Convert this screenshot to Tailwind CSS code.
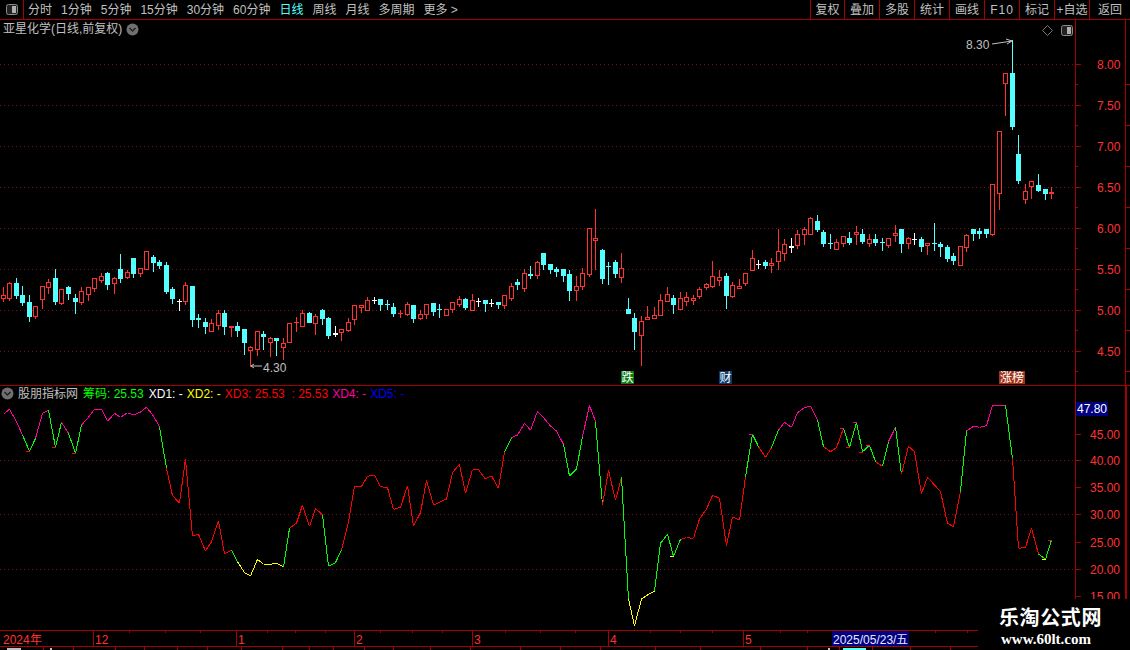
<!DOCTYPE html>
<html lang="zh-CN">
<head>
    <meta charset="UTF-8">
    <title>亚星化学 日线</title>
    <script src="https://cdn.jsdelivr.net/npm/@tailwindcss/browser@4"></script>
</head>
<body class="bg-black overflow-hidden font-['Liberation_Sans','Noto_Sans_CJK_SC',sans-serif] text-xs text-[#c0c0c0]">
<div class="relative w-[1130px] h-[650px] flex flex-col overflow-hidden">

    <!-- toolbar -->
    <div class="h-[20px] flex items-center border-b border-[#a80000] leading-none">
        <div class="w-[24px] h-full flex items-center justify-center border-r border-[#a80000]">
            <svg width="12" height="11" viewBox="0 0 12 11"><rect x="0.5" y="0.5" width="11" height="10" rx="2" fill="#222" stroke="#8c8c8c"/><rect x="6" y="2" width="4" height="7" fill="#b0b0b0"/></svg>
        </div>
        <div class="flex items-center gap-[9px] ml-[4px]">
            <span>分时</span><span>1分钟</span><span>5分钟</span><span>15分钟</span><span>30分钟</span><span>60分钟</span>
            <span class="text-[#54ffff]">日线</span><span>周线</span><span>月线</span><span>多周期</span><span>更多 &gt;</span>
        </div>
        <div class="ml-auto flex h-full">
            <span class="w-[34px] flex items-center justify-center border-l border-[#a80000]">复权</span>
            <span class="w-[35px] flex items-center justify-center border-l border-[#a80000]">叠加</span>
            <span class="w-[35px] flex items-center justify-center border-l border-[#a80000]">多股</span>
            <span class="w-[35px] flex items-center justify-center border-l border-[#a80000]">统计</span>
            <span class="w-[35px] flex items-center justify-center border-l border-[#a80000]">画线</span>
            <span class="w-[35px] flex items-center justify-center border-l border-[#a80000] tracking-[1px]">F10</span>
            <span class="w-[35px] flex items-center justify-center border-l border-[#a80000]">标记</span>
            <span class="w-[35px] flex items-center justify-center border-l border-[#a80000]">+自选</span>
            <span class="w-[41px] flex items-center justify-center border-l border-[#a80000]">返回</span>
        </div>
    </div>

    <!-- price panel -->
    <div class="relative h-[366px] border-b border-[#a80000]">
        <svg id="price" class="block" width="1130" height="365" viewBox="0 20 1130 365" shape-rendering="crispEdges" font-family="Liberation Sans" font-size="12"></svg>
        <div class="absolute left-[3px] top-[2px] h-[14px] flex items-center gap-[4px] leading-none">
            <span>亚星化学(日线,前复权)</span>
            <svg width="13" height="13" viewBox="0 0 13 13"><circle cx="6.5" cy="6.5" r="6" fill="#707070"/><path d="M3.5 5l3 3 3-3" fill="none" stroke="#222" stroke-width="1.5"/></svg>
        </div>
        <svg class="absolute left-[1042px] top-[5px]" width="32" height="12" viewBox="0 0 32 12"><path d="M5.5 0.5l5 5-5 5-5-5z" fill="none" stroke="#777"/><rect x="19.5" y="0.5" width="11" height="10" rx="2" fill="#222" stroke="#8c8c8c"/><rect x="25" y="2" width="4" height="7" fill="#b0b0b0"/></svg>
        <span class="absolute left-[621px] top-[351px] w-[13px] h-[13px] bg-[#0a7a14] text-white flex items-center justify-center leading-none">跌</span>
        <span class="absolute left-[719px] top-[351px] w-[13px] h-[13px] bg-[#0c3c6e] text-white flex items-center justify-center leading-none">财</span>
        <span class="absolute left-[999px] top-[351px] w-[26px] h-[13px] bg-[#a03418] text-white flex items-center justify-center leading-none">涨榜</span>
    </div>

    <!-- indicator panel -->
    <div class="relative h-[244px]">
        <svg id="indicator" class="block" width="1130" height="244" viewBox="0 386 1130 244" shape-rendering="crispEdges" font-family="Liberation Sans" font-size="12"></svg>
        <div class="absolute left-[1px] top-0 h-[15px] flex items-center gap-[4px] leading-none whitespace-nowrap">
            <svg width="13" height="13" viewBox="0 0 13 13"><circle cx="6.5" cy="6.5" r="6" fill="#707070"/><path d="M3.5 5l3 3 3-3" fill="none" stroke="#222" stroke-width="1.5"/></svg>
            <span class="mr-[1px]">股朋指标网</span>
            <span class="text-[#00ff00] mr-[1px]">筹码: 25.53</span>
            <span class="text-white">XD1: -</span>
            <span class="text-[#ffff00]">XD2: -</span>
            <span class="text-[#ff0000]">XD3: 25.53&nbsp;&nbsp;: 25.53</span>
            <span class="text-[#ff00a0]">XD4: -</span>
            <span class="text-[#0000ff]">XD5: -</span>
        </div>
        <span class="absolute left-[1076px] top-[16px] w-[32px] h-[14px] bg-[#000080] text-white flex items-center justify-center leading-none">47.80</span>
    </div>

    <!-- time axis -->
    <svg id="timeaxis" class="block" width="1130" height="20" viewBox="0 630 1130 20" shape-rendering="crispEdges" font-family="Liberation Sans" font-size="12"></svg>

    <!-- watermark -->
    <div class="absolute left-[978px] top-[599px] w-[152px] h-[51px] bg-black flex flex-col items-start pl-[21px] pt-[8px] text-white leading-none">
        <span class="text-[20px] font-bold tracking-[0.6px] font-['Noto_Sans_CJK_SC',sans-serif]">乐淘公式网</span>
        <span class="mt-[5px] ml-[2px] text-[15px] font-bold font-['Liberation_Serif',serif]">www.60lt.com</span>
    </div>
</div>

<script>
    const RED = '#ff3232', CYAN = '#54ffff', GRID = '#7a1010', AXIS = '#a80000';
    const xAt = i => Math.floor(3.4 + 6.51 * i);
    const rect = (x, y, w, h, c) => `<rect x="${x}" y="${y}" width="${w}" height="${h}" fill="${c}"/>`;
    const dots = (y, x2 = 1075) => `<line x1="0" x2="${x2}" y1="${y + .5}" y2="${y + .5}" stroke="${GRID}" stroke-dasharray="1 3"/>`;

    // type, body top, body bottom, wick top, wick bottom
    const candlesA = [['r',195,204,170,212],['r',160,204,157,209],['c',160,195,145,204],['c',195,216,168,225],['c',216,258,195,273],['r',229,258,229,264],['r',169,207,169,234],['r',157,170,148,190],['c',144,213,117,222],['r',178,219,178,222],['c',171,189,168,207],['c',204,213,193,249],['r',184,216,171,222],['r',172,192,172,210],['r',145,173,145,183],['r',139,149,130,156],['c',129,162,126,177],['r',145,158,142,189],['c',117,144,72,156],['r',126,140,121,144],['c',84,129,84,141],['r',115,128,115,137],['r',64,116,64,118],['c',81,96,75,123],['c',96,105,90,114],['c',105,183,96,189],['c',177,204,171,219],['w',212,213,207,240],['r',166,213,156,222],['c',168,267,168,288],['c',265,266,252,291],['c',276,288,264,309],['r',280,303,267,303],['r',249,284,240,297],['c',249,288,240,312],['r',289,290,288,318],['c',288,300,276,318],['c',297,336,297,372],['r',352,359,348,408],['r',304,356,304,375],['c',312,318,303,357],['r',324,335,321,378],['c',324,330,324,375],['r',340,350,324,387],['r',280,335,280,336],['r',276,277,261,303]];
    const candlesB = [['r',370,408,360,408],['c',369,396,366,396],['r',378,399,372,432],['c',360,384,357,402],['c',384,435,381,444],['w',430,431,408,438],['r',418,425,418,450],['r',396,420,384,423],['r',346,387,346,402],['r',346,352,346,366],['r',330,360,321,360],['w',329,330,321,339],['c',327,342,327,360],['c',342,343,330,357],['c',351,369,339,378],['r',369,370,360,381],['r',343,372,336,375],['c',345,384,345,396],['r',373,384,360,387],['r',343,372,343,384],['c',339,363,339,375],['c',357,358,342,381],['r',358,375,357,375],['r',337,357,337,366],['r',328,342,318,348],['c',327,351,324,357],['r',331,360,312,360],['w',333,334,324,348],['c',331,339,331,363],['w',338,339,327,348],['c',336,342,336,354],['r',316,345,316,354],['r',289,324,279,330],['c',276,282,267,297],['r',250,294,237,303],['c',253,255,228,264],['r',217,255,213,264],['c',189,222,189,237],['c',222,237,222,249],['c',237,243,231,258],['c',237,255,237,273],['c',252,300,240,330],['r',289,300,258,330],['r',250,288,234,297],['r',115,251,115,258],['r',145,149,57,237],['c',180,264,177,279],['c',228,229,216,282],['c',216,249,210,261],['r',235,261,189,276],['c',357,369,324,369],['c',384,423,369,477],['r',394,435,378,525]];
    const candlesC = [['r',382,386,348,386],['r',376,383,351,383],['r',331,374,312,374],['r',313,332,291,332],['c',324,342,315,369],['r',325,356,306,356],['r',322,332,306,345],['r',325,331,315,342],['r',298,317,291,324],['r',283,290,279,297],['r',259,287,213,291],['r',262,269,240,285],['c',258,315,249,354],['r',286,317,276,320],['r',289,293,267,293],['r',250,278,250,285],['r',205,239,180,239],['w',221,222,210,234],['c',216,225,210,234],['r',220,224,204,246],['r',184,212,117,237],['r',163,188,147,210],['w',169,170,144,186],['r',133,164,120,174],['r',118,131,111,162],['r',85,131,81,131],['c',93,117,75,123],['c',126,159,120,168],['c',159,160,132,174],['r',157,176,147,176],['r',139,158,139,168],['c',144,156,126,162],['r',127,131,108,162],['c',132,153,117,159],['r',148,158,132,168],['c',147,156,132,165],['c',156,157,144,180],['r',145,164,145,171],['r',130,134,105,153],['c',117,159,117,186],['r',145,158,141,174],['w',147,148,129,162],['c',148,168,141,183],['r',160,166,160,192],['c',159,160,99,180],['c',162,168,156,198],['c',171,204,165,213],['c',198,210,189,222],['r',169,224,168,225],['r',135,170,132,183],['c',117,129,117,150],['c',123,129,114,144],['c',117,129,117,141]];
    const candlesD = [['r',463,611,463,615],['r',304,490,304,537],['r',130,158,130,255],['c',129,288,30,297],['c',372,450,315,459],['r',484,506,462,519],['r',454,467,454,504],['c',465,480,432,483],['c',477,489,477,507],['r',486,489,471,504]];
    const toReal = (list, off) => list.map(([t, ...v]) => [t, ...v.map(n => Math.round(off + n / 3))]);
    const candles = [...toReal(candlesA, 230), ...toReal(candlesB, 190), ...toReal(candlesC, 190), ...toReal(candlesD, 30)];

    let price = '';
    [64, 105, 146, 187, 228, 269, 310, 351].forEach((y, n) => {
        price += dots(y) + rect(1075, y, 6, 1, AXIS) + rect(1075, y + 20, 3, 1, AXIS) + rect(1125, y + 20, 5, 1, AXIS);
        price += `<text x="1097" y="${y + 5}" fill="${RED}" shape-rendering="auto">${(8 - n * .5).toFixed(2)}</text>`;
    });
    price += rect(1075, 20, 1, 365, AXIS) + rect(1125, 20, 1, 365, AXIS);
    candles.forEach(([t, top, bottom, wTop, wBottom], i) => {
        const x = xAt(i), c = t === 'r' ? RED : t === 'c' ? CYAN : '#ffffff';
        price += rect(x, wTop, 1, wBottom - wTop + 1, c);
        price += rect(x - 2, top, 5, bottom - top + 1, c);
        if (t === 'r' && bottom - top > 1) price += rect(x - 1, top + 1, 3, bottom - top - 1, '#000');
    });
    // high and low markers
    price += `<text x="966" y="49" fill="#c0c0c0" shape-rendering="auto">8.30</text><path d="M992 44l20-3M1006 39l6 2-5 3" fill="none" stroke="#c0c0c0" shape-rendering="auto"/>`;
    price += `<text x="263" y="372" fill="#c0c0c0" shape-rendering="auto">4.30</text><path d="M251 366h11M254 364l-3 2 3 2" fill="none" stroke="#c0c0c0" shape-rendering="auto"/>`;
    document.getElementById('price').innerHTML = price;

    // indicator line, y values read in three stretches
    const lineA = [88,73,110,150,199,160,85,76,187,112,145,205,120,97,73,73,109,85,97,83,90,81,67,93,125,250,332,354,222,453,448,498,470,408,507,496,530,563,573,523,538,538,534,546,430,414,360,424,370,390,544,533,495,410,304,304,274,270];
    const lineB = [275,278,343,337,272,393,353,256,330,322,312,233,208,295,224,224,252,242,280,170,128,120,85,105,49,68,93,108,148,243,222,125,31,80,331,226,316,247,612,693,612,600,588,445,418,484,433,428,430,372,342,301];
    const lineC = [310,452,365,376,245,118,155,187,158,105,82,97,53,38,33,75,155,170,158,100,157,82,170,151,200,214,140,97,238,154,170,296,247,270,290,385,395,290,108,94,97,92,31,31,31,190,460,457,400,477,493,435];
    const ys = [...lineA.map(v => 385 + v / 3), ...lineB.map(v => 395 + v / 3), ...lineC.map(v => 395 + v / 3)];
    const colors = { m: '#ff00a0', g: '#00ff00', r: '#ff0000', y: '#ffff00' };
    const runs = [[3,'m'],[2,'g'],[2,'m'],[2,'g'],[1,'m'],[2,'g'],[12,'m'],[1,'g'],[10,'r'],[1,'g'],[7,'y'],[1,'g'],[5,'r'],[3,'g'],[25,'r'],[1,'g'],[8,'m'],[3,'g'],[2,'m'],[1,'g'],[3,'r'],[1,'g'],[4,'y'],[4,'g'],[10,'r'],[2,'g'],[2,'r'],[1,'g'],[6,'m'],[1,'g'],[3,'r'],[5,'g'],[1,'r'],[1,'g'],[1,'m'],[1,'g'],[9,'r'],[1,'g'],[6,'m'],[1,'g'],[4,'r'],[2,'g']];
    const segColors = runs.flatMap(([n, c]) => Array(n).fill(colors[c]));
    const ticks = [[4,'r'],[8,'r'],[11,'r'],[103,'y'],[115,'m'],[129,'m'],[130,'r'],[131,'m'],[132,'r'],[133,'m'],[160,'y'],[161,'r']];

    let ind = '';
    [460, 514, 569].forEach(y => ind += dots(y));
    [[45,434],[40,460],[35,487],[30,514],[25,542],[20,569],[15,596]].forEach(([v, y]) => {
        ind += rect(1075, y, 6, 1, AXIS);
        ind += `<text x="1120" y="${y + 5}" text-anchor="end" fill="${RED}" shape-rendering="auto">${v.toFixed(2)}</text>`;
    });
    ind += rect(1075, 386, 1, 244, AXIS) + rect(1125, 386, 2, 244, AXIS);
    ys.slice(0, -1).forEach((y, i) => {
        ind += `<line x1="${xAt(i) + .5}" y1="${y}" x2="${xAt(i + 1) + .5}" y2="${ys[i + 1]}" stroke="${segColors[i] || colors.r}"/>`;
    });
    ticks.forEach(([i, c]) => ind += rect(xAt(i) - 3, Math.round(ys[i]), 4, 1, colors[c]));
    document.getElementById('indicator').innerHTML = ind;

    // time axis
    let axis = rect(0, 630, 978, 1, AXIS) + rect(0, 646, 978, 1, AXIS);
    [129,165,200,267,295,325,380,412,442,505,540,575,650,680,712,780,807,935,967].forEach(x => axis += rect(x, 631, 1, 2, AXIS));
    [[93,'12'],[236,'1'],[354,'2'],[472,'3'],[608,'4'],[743,'5']].forEach(([x, t]) => {
        axis += rect(x, 631, 1, 15, AXIS) + `<text x="${x + 2}" y="644" fill="${RED}" shape-rendering="auto">${t}</text>`;
    });
    axis += `<text x="3" y="644" fill="${RED}" shape-rendering="auto">2024年</text>`;
    axis += rect(832, 631, 77, 15, '#000080') + `<text x="833" y="644" fill="#e8e8ff" shape-rendering="auto">2025/05/23/五</text>`;
    [43,73,115,144,177,207,241,282,309,333,364,393,430,470,520,560,600,655,700,760,807,839,872,910,950].forEach(x => axis += rect(x, 647, 1, 3, AXIS));
    axis += rect(7, 648, 14, 2, '#c0c0c0') + rect(50, 648, 2, 2, '#c0c0c0') + rect(843, 648, 23, 2, CYAN) + rect(828, 648, 2, 2, '#c0c0c0');
    document.getElementById('timeaxis').innerHTML = axis;
</script>
</body>
</html>
